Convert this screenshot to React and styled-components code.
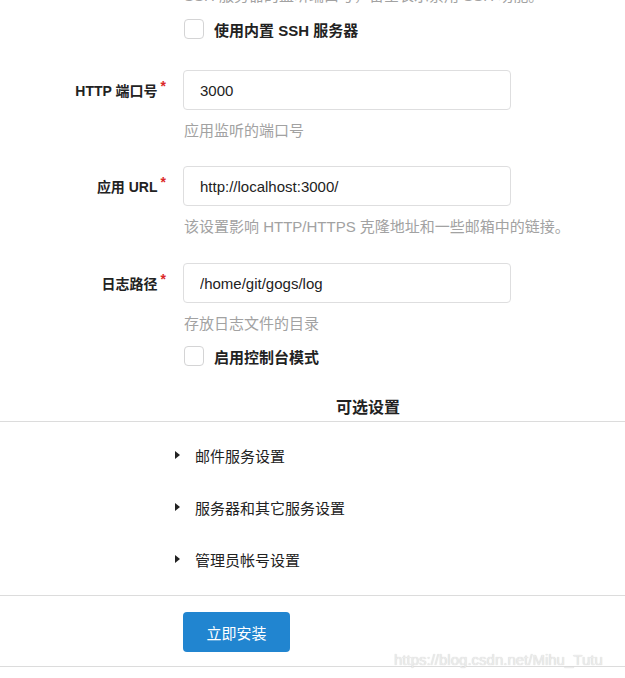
import React from 'react';
import styled, { createGlobalStyle } from 'styled-components';

const GlobalStyle = createGlobalStyle`
  html, body {
    margin: 0;
    padding: 0;
    background: #fff;
    overflow: hidden;
  }
  body {
    font-family: "Liberation Sans", "Noto Sans CJK SC", sans-serif;
    font-size: 15px;
    color: #333;
  }
`;

const Page = styled.div`
  position: relative;
  width: 625px;
  height: 678px;
  overflow: hidden;
`;

const Help = styled.div`
  margin-left: 184px;
  margin-top: ${p => p.$top ?? 11}px;
  line-height: 20px;
  font-size: 15px;
  color: #a2a2a2;
  white-space: nowrap;
`;

const CheckRow = styled.label`
  display: flex;
  align-items: center;
  margin-left: 184px;
  margin-top: ${p => p.$top}px;
  height: 20px;
  gap: 10px;
  font-weight: bold;
  font-size: 15px;
  color: #222;
`;

const Box = styled.span`
  width: 18px;
  height: 18px;
  border: 1px solid #d4d4d5;
  border-radius: 4px;
  background: #fff;
`;

const Field = styled.div`
  display: grid;
  grid-template-columns: 183px 328px;
  align-items: center;
  margin-top: ${p => p.$top}px;
`;

const Label = styled.div`
  justify-self: end;
  padding-right: 17px;
  font-size: 14px;
  font-weight: bold;
  color: #222;
  white-space: nowrap;

  &::after {
    content: '*';
    color: #db2828;
    margin-left: 3px;
    position: relative;
    top: -5px;
  }
`;

const Input = styled.input`
  box-sizing: border-box;
  width: 328px;
  height: 40px;
  padding: 0 16px;
  border: 1px solid #dededf;
  border-radius: 4px;
  font-family: "Liberation Sans", "Noto Sans CJK SC", sans-serif;
  font-size: 15px;
  color: #222;
  outline: none;
`;

const Heading = styled.h3`
  margin: 32px 0 0;
  padding-left: 336px;
  line-height: 20px;
  font-size: 16px;
  font-weight: bold;
  color: #222;
`;

const Divider = styled.hr`
  margin: ${p => p.$top}px 0 0;
  border: 0;
  border-top: 1px solid #dcdcdc;
`;

const Accordion = styled.div`
  padding: 7px 0 10px;
`;

const Item = styled.div`
  display: flex;
  align-items: center;
  height: 52px;
  padding-left: 175px;
  gap: 15px;
  font-size: 15px;
  color: #222;
`;

const Caret = styled.span`
  width: 0;
  height: 0;
  border-top: 4.5px solid transparent;
  border-bottom: 4.5px solid transparent;
  border-left: 5px solid #222;
`;

const Button = styled.button`
  display: block;
  margin: 16px 0 14px 183px;
  width: 107px;
  height: 40px;
  border: 0;
  border-radius: 4px;
  background: #2185d0;
  color: #fff;
  font-family: "Liberation Sans", "Noto Sans CJK SC", sans-serif;
  font-size: 15px;
  cursor: pointer;
`;

const Watermark = styled.div`
  position: absolute;
  left: 394px;
  top: 650px;
  font-family: "Liberation Sans", sans-serif;
  font-size: 15px;
  line-height: 20px;
  color: #ececec;
  text-shadow: 0 0 1px #c8c8c8;
  white-space: nowrap;
`;

const fields = [
  { label: 'HTTP 端口号', value: '3000', help: '应用监听的端口号', top: 31 },
  { label: '应用 URL', value: 'http://localhost:3000/', help: '该设置影响 HTTP/HTTPS 克隆地址和一些邮箱中的链接。', top: 25 },
  { label: '日志路径', value: '/home/git/gogs/log', help: '存放日志文件的目录', top: 26 },
];

const sections = ['邮件服务设置', '服务器和其它服务设置', '管理员帐号设置'];

export default function App() {
  return (
    <Page>
      <GlobalStyle />
      <Help $top={-14}>SSH 服务器的监听端口号，留空表示禁用 SSH 功能。</Help>
      <CheckRow $top={13}>
        <Box />
        使用内置 SSH 服务器
      </CheckRow>

      {fields.map(f => (
        <React.Fragment key={f.label}>
          <Field $top={f.top}>
            <Label>{f.label}</Label>
            <Input defaultValue={f.value} />
          </Field>
          <Help>{f.help}</Help>
        </React.Fragment>
      ))}

      <CheckRow $top={12}>
        <Box />
        启用控制台模式
      </CheckRow>

      <Heading>可选设置</Heading>
      <Divider $top={3} />
      <Accordion>
        {sections.map(s => (
          <Item key={s}>
            <Caret />
            {s}
          </Item>
        ))}
      </Accordion>
      <Divider $top={0} />
      <Button>立即安装</Button>
      <Divider $top={0} />
      <Watermark>https://blog.csdn.net/Mihu_Tutu</Watermark>
    </Page>
  );
}
